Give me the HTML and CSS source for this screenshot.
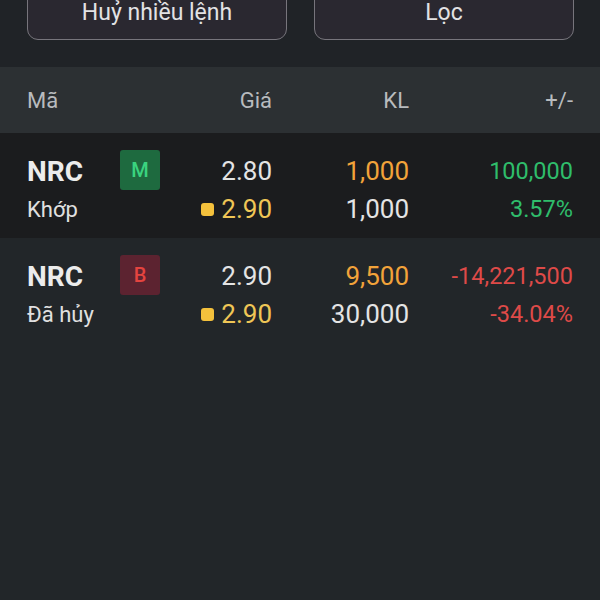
FILE: index.html
```html
<!DOCTYPE html>
<html lang="vi">
<head>
<meta charset="utf-8">
<link rel="stylesheet" href="styles.css">
</head>
<body>
<div class="toolbar">
  <div class="btn">Huỷ nhiều lệnh</div>
  <div class="btn">Lọc</div>
</div>
<div class="grid head">
  <div class="c1">Mã</div>
  <div class="c3 r">Giá</div>
  <div class="c4 r">KL</div>
  <div class="c5 r">+/-</div>
</div>
<div class="grid row dark">
  <div class="c1 sym">NRC</div>
  <div class="c2"><span class="badge buy">M</span></div>
  <div class="c3 r num">2.80</div>
  <div class="c4 r num orange">1,000</div>
  <div class="c5 r chg green">100,000</div>
  <div class="c1 status">Khớp</div>
  <div class="c3 r num yellow"><span class="dot"></span>2.90</div>
  <div class="c4 r num">1,000</div>
  <div class="c5 r chg green">3.57%</div>
</div>
<div class="grid row">
  <div class="c1 sym">NRC</div>
  <div class="c2"><span class="badge sell">B</span></div>
  <div class="c3 r num">2.90</div>
  <div class="c4 r num orange">9,500</div>
  <div class="c5 r chg red">-14,221,500</div>
  <div class="c1 status">Đã hủy</div>
  <div class="c3 r num yellow"><span class="dot"></span>2.90</div>
  <div class="c4 r num">30,000</div>
  <div class="c5 r chg red">-34.04%</div>
</div>
</body>
</html>
```
FILE: styles.css
```css
html, body {
  margin: 0;
  padding: 0;
  background: #222629;
  font-family: Roboto, "Noto Sans", sans-serif;
  color: #e4e4e4;
  height: 600px;
  overflow: hidden;
}
.toolbar {
  height: 67px;
  background: #202327;
  display: flex;
  gap: 27px;
  padding: 0 26px 0 27px;
  box-sizing: border-box;
  overflow: hidden;
}
.btn {
  flex: 1;
  height: 62px;
  margin-top: -22px;
  box-sizing: border-box;
  border: 1.5px solid #77757c;
  border-radius: 11px;
  background: #2a2830;
  color: #e2e2e4;
  font-size: 23px;
  display: flex;
  align-items: flex-end;
  justify-content: center;
  padding-bottom: 13px;
  line-height: 26px;
}
.grid {
  display: grid;
  grid-template-columns: 93px 40px 112px 137px 164px;
  grid-auto-flow: row dense;
  padding: 0 26px 0 27px;
}
.c1 { grid-column: 1; }
.c2 { grid-column: 2; }
.c3 { grid-column: 3; }
.c4 { grid-column: 4; }
.c5 { grid-column: 5; }
.r { text-align: right; }
.head {
  height: 66px;
  background: #2c3033;
  align-items: center;
  color: #b8bbbe;
  font-size: 22px;
}
.row {
  padding-top: 19px;
  padding-bottom: 10px;
  grid-auto-rows: 38px;
  align-items: center;
}
.dark { background: #1b1c1e; }
.sym {
  font-size: 28px;
  font-weight: 700;
  color: #ececec;
}
.status {
  font-size: 22px;
  color: #e0e0e0;
}
.num { font-size: 26px; }
.chg { font-size: 23.5px; }
.badge {
  display: flex;
  width: 40px;
  height: 40px;
  border-radius: 3px;
  align-items: center;
  justify-content: center;
  font-size: 20px;
  font-weight: 500;
  margin-top: -2px;
}
.buy { background: #1e6a3f; color: #3ad47f; }
.sell { background: #5c2330; color: #e4443f; }
.orange { color: #f2a33a; }
.yellow { color: #efc656; }
.green { color: #2fbd6b; }
.red { color: #de4a48; }
.dot {
  display: inline-block;
  width: 13px;
  height: 13px;
  border-radius: 3px;
  background: #f4c13c;
  margin-right: 7px;
  vertical-align: 2px;
}
```
